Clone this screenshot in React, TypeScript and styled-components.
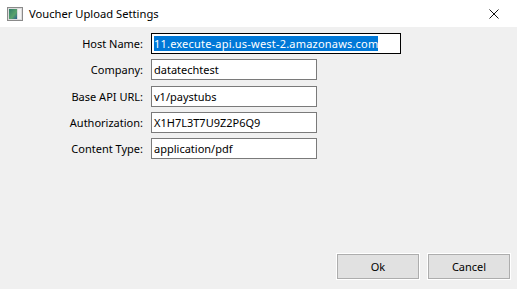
import { FC } from "react";
import styled, { createGlobalStyle } from "styled-components";

type TField = {
  label: string;
  value: string;
  wide?: boolean;
  focused?: boolean;
};

const fields: TField[] = [
  {
    label: "Host Name:",
    value: "11.execute-api.us-west-2.amazonaws.com",
    wide: true,
    focused: true,
  },
  { label: "Company:", value: "datatechtest" },
  { label: "Base API URL:", value: "v1/paystubs" },
  { label: "Authorization:", value: "X1H7L3T7U9Z2P6Q9" },
  { label: "Content Type:", value: "application/pdf" },
];

const AppIcon: FC = () => (
  <svg width="16" height="14" viewBox="0 0 16 14">
    <defs>
      <linearGradient id="pane" x1="0" y1="0" x2="1" y2="1">
        <stop offset="0" stopColor="#2f7d6a" />
        <stop offset="0.6" stopColor="#5aa36b" />
        <stop offset="1" stopColor="#2a5f8f" />
      </linearGradient>
    </defs>
    <rect x="0.5" y="0.5" width="15" height="13" fill="#dcdcdc" stroke="#8a8a8a" />
    <rect x="2" y="2" width="8" height="10" fill="url(#pane)" />
    <rect x="11" y="2" width="3" height="10" fill="#f4f4f4" />
  </svg>
);

const CloseIcon: FC = () => (
  <svg width="10" height="10" viewBox="0 0 10 10">
    <path d="M0.5 0.5 L9.5 9.5 M9.5 0.5 L0.5 9.5" stroke="#111" strokeWidth="1" />
  </svg>
);

const App: FC = () => {
  return (
    <Window>
      <GlobalStyle />
      <TitleBar>
        <AppIcon />
        <h1 className="title">Voucher Upload Settings</h1>
        <CloseButton>
          <CloseIcon />
        </CloseButton>
      </TitleBar>
      <Body>
        <Form>
          {fields.map((f) => (
            <Row key={f.label}>
              <Label>{f.label}</Label>
              <Input wide={f.wide} focused={f.focused}>
                {f.focused ? <Selected>{f.value}</Selected> : f.value}
              </Input>
            </Row>
          ))}
        </Form>
        <Footer>
          <Button>Ok</Button>
          <Button>Cancel</Button>
        </Footer>
      </Body>
    </Window>
  );
};

export default App;

const GlobalStyle = createGlobalStyle`
  html, body {
    margin: 0;
    padding: 0;
    width: 517px;
    height: 289px;
    overflow: hidden;
    background: #f0f0f0;
  }
  * {
    box-sizing: border-box;
  }
`;

const Window = styled.div`
  display: flex;
  flex-direction: column;
  width: 517px;
  height: 289px;
  background: #f0f0f0;
  font-family: "Noto Sans", "Open Sans", sans-serif;
  font-size: 11px;
  color: #000;
`;

const TitleBar = styled.div`
  display: flex;
  align-items: center;
  height: 27px;
  padding-left: 7px;
  background: #fff;
  gap: 6px;
  .title {
    margin: 0;
    flex: 1;
    font-size: 11.2px;
    font-weight: 400;
    color: #000;
  }
`;

const CloseButton = styled.div`
  display: flex;
  align-items: center;
  justify-content: center;
  width: 46px;
  height: 27px;
`;

const Body = styled.div`
  display: flex;
  flex-direction: column;
  flex: 1;
  padding: 6px 7px 10px 0;
`;

const Form = styled.div`
  display: flex;
  flex-direction: column;
  gap: 5.25px;
  flex: 1;
`;

const Row = styled.div`
  display: flex;
  align-items: center;
  height: 21px;
`;

const Label = styled.div`
  width: 151px;
  padding-right: 8px;
  text-align: right;
  white-space: nowrap;
`;

type TInput = {
  wide?: boolean;
  focused?: boolean;
};
const Input = styled.div<TInput>`
  display: flex;
  align-items: center;
  width: ${({ wide }) => (wide ? "250px" : "166px")};
  height: 21px;
  padding: 0 2px;
  background: #fff;
  border: 1px solid ${({ focused }) => (focused ? "#000" : "#7a7a7a")};
  white-space: nowrap;
  overflow: hidden;
  letter-spacing: ${({ focused }) => (focused ? "0.2px" : "0")};
`;

const Selected = styled.span`
  background: #0078d7;
  color: #fff;
  line-height: 15px;
`;

const Footer = styled.div`
  display: flex;
  justify-content: flex-end;
  gap: 9px;
`;

const Button = styled.div`
  display: flex;
  align-items: center;
  justify-content: center;
  width: 82px;
  height: 25px;
  background: #e1e1e1;
  border: 1px solid #adadad;
  box-shadow: 0 0 0 1px #fff;
`;
